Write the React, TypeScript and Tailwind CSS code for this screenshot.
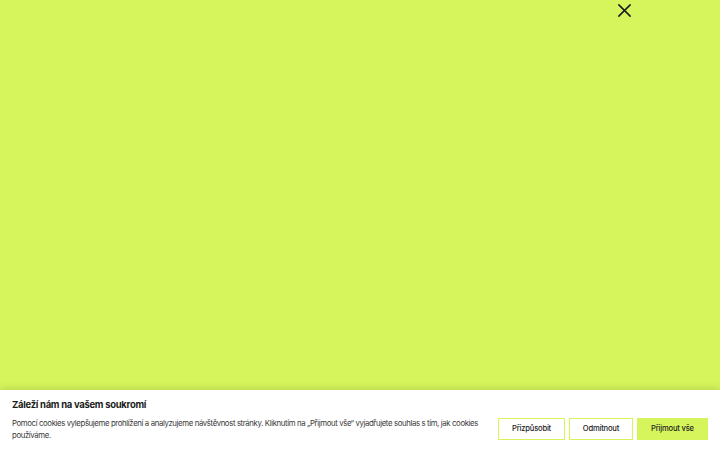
import React from 'react';

const CloseIcon: React.FC = () => (
  <svg className="w-[17px] h-[17px]" viewBox="0 0 24 24" fill="none" stroke="currentColor" strokeWidth={2.2} strokeLinecap="round">
    <path d="M4 4l16 16M20 4L4 20" />
  </svg>
);

const CookieBanner: React.FC = () => {
  return (
    <div className="bg-white shadow-[0_-2px_8px_rgba(0,0,0,0.12)] px-3 pt-[8px] pb-[9px]">
      <h2 className="text-[9.5px] font-bold tracking-[-0.3px] text-[#1b1b1b] leading-[14px]">Záleží nám na vašem soukromí</h2>
      <div className="flex items-center justify-between mt-[5px]">
        <p className="w-[474px] text-[7.8px] tracking-[-0.38px] leading-[12px] text-[#3a3a3a]">
          Pomocí cookies vylepšujeme prohlížení a analyzujeme návštěvnost stránky. Kliknutím na „Přijmout vše“ vyjadřujete souhlas s tím, jak cookies používáme.
        </p>
        <div className="flex gap-1">
          <button className="w-[67px] h-[22px] border border-[#d6f55c] bg-white text-[7.6px] font-medium tracking-[-0.2px] text-[#222]">Přizpůsobit</button>
          <button className="w-[64px] h-[22px] border border-[#d6f55c] bg-white text-[7.6px] font-medium tracking-[-0.2px] text-[#222]">Odmítnout</button>
          <button className="w-[71px] h-[22px] border border-[#d6f55c] bg-[#d6f55c] text-[7.6px] font-medium tracking-[-0.2px] text-[#222]">Přijmout vše</button>
        </div>
      </div>
    </div>
  );
};

export default function App() {
  return (
    <div className="h-screen flex flex-col justify-between bg-[#d6f55c] font-['Inter',sans-serif]">
      <div className="flex justify-end pr-[87px] pt-[2px]">
        <button className="text-[#1e1e1e]">
          <CloseIcon />
        </button>
      </div>
      <CookieBanner />
    </div>
  );
}
